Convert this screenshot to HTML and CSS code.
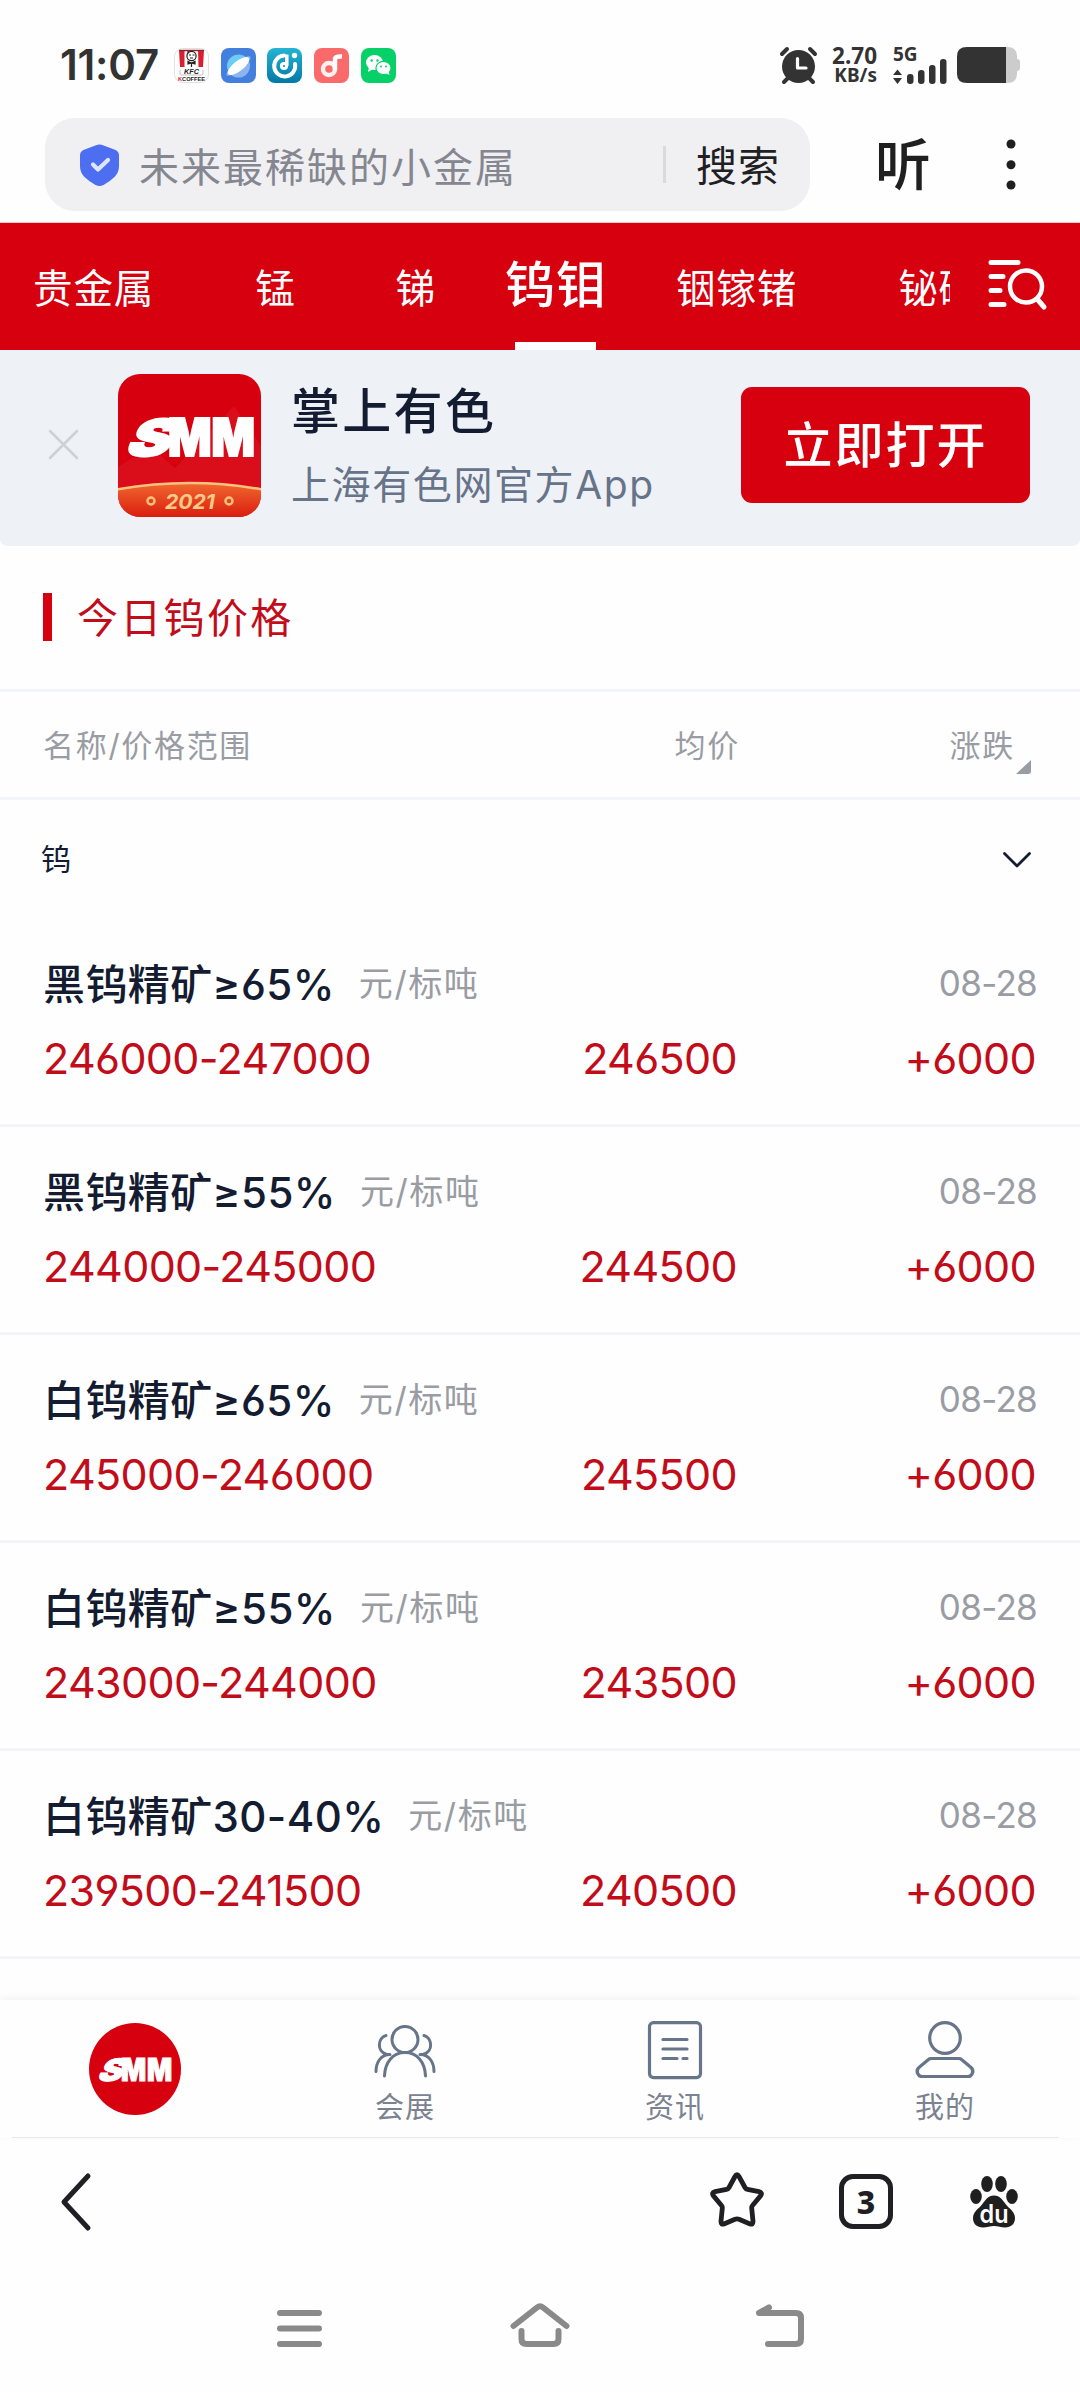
FILE: index.html
```html
<!DOCTYPE html>
<html lang="zh-CN">
<head>
<meta charset="utf-8">
<title>今日钨价格</title>
<link rel="stylesheet" href="styles.css">
</head>
<body>
<header class="status">
  <span class="clock">11:07</span>
  <div class="apps">
    <svg class="app" viewBox="0 0 35 35">
      <rect x=".5" y=".5" width="34" height="34" rx="8" fill="#fff" stroke="#e4e0e0"/>
      <path d="M5 2h5.500v17H6zM13 2h3l-2 6zM24 2h6l-1 17h-4.500z" fill="#d9202f"/>
      <path d="M5 2.500h25" stroke="#8a2430" stroke-width="1.500"/>
      <circle cx="17.500" cy="8" r="4.600" fill="#fff" stroke="#222" stroke-width="1.200"/>
      <path d="M15 7h2m1.500 0h2M16 10h3M14 13.500l3.500 1.500 3.500-1.500v2.500l-3.500-1-3.500 1zM17.500 15v4" fill="#222" stroke="#222" stroke-width="1.200"/>
      <text x="10" y="26" class="kfc" textLength="15" lengthAdjust="spacingAndGlyphs">KFC</text>
      <path d="M6 22v4q0 1 1.500 1h20q1.500 0 1.500-1v-4" fill="none" stroke="#999" stroke-width=".6"/>
      <text x="4" y="33" class="coffee" textLength="27" lengthAdjust="spacingAndGlyphs"><tspan fill="#d9202f">K</tspan>COFFEE</text>
    </svg>
    <svg class="app" viewBox="0 0 35 35">
      <rect width="35" height="35" rx="8" fill="#437fdc"/>
      <circle cx="17.500" cy="18" r="11.500" fill="#8db4ee"/>
      <path d="M6.500 21a11.500 11.500 0 0 1 19-11z" fill="#69cdf5"/>
      <ellipse cx="17.500" cy="18" rx="15" ry="4" transform="rotate(-38 17.500 18)" fill="#8db4ee"/>
      <ellipse cx="17.500" cy="18" rx="13" ry="5" transform="rotate(-38 17.500 18)" fill="#fff"/>
    </svg>
    <svg class="app" viewBox="0 0 35 35">
      <defs><linearGradient id="teal" x2="0" y2="1"><stop stop-color="#25b4d2"/><stop offset="1" stop-color="#0279a6"/></linearGradient></defs>
      <rect width="35" height="35" rx="8" fill="url(#teal)"/>
      <path d="M17 7.500a10.500 10.500 0 1 0 11 8.500" fill="none" stroke="#fff" stroke-width="4" stroke-linecap="round"/>
      <circle cx="17" cy="18" r="2.600" fill="none" stroke="#fff" stroke-width="3"/>
      <path d="M19.800 18V6.500" stroke="#fff" stroke-width="3.500"/>
      <circle cx="27.500" cy="7.500" r="2.700" fill="#fff"/>
    </svg>
    <svg class="app" viewBox="0 0 35 35">
      <rect width="35" height="35" rx="8" fill="#fa6a6a"/>
      <circle cx="15" cy="21" r="6" fill="none" stroke="#fff" stroke-width="4.500" opacity=".9"/>
      <path d="M21 22V11q0-3 7-2.500" fill="none" stroke="#fff" stroke-width="4.500"/>
    </svg>
    <svg class="app" viewBox="0 0 35 35">
      <rect width="35" height="35" rx="8" fill="#06d168"/>
      <ellipse cx="13.500" cy="14.500" rx="8.500" ry="7.500" fill="#fff"/>
      <path d="M8 19l-1 5 5-3z" fill="#fff"/>
      <ellipse cx="22.500" cy="20" rx="7.600" ry="6.600" fill="#fff" stroke="#06d168" stroke-width="1.200"/>
      <path d="M24 25l4.500 2-1-4z" fill="#fff"/>
      <g fill="#06d168"><circle cx="10.700" cy="12.500" r="1.200"/><circle cx="16.500" cy="12.500" r="1.200"/><circle cx="20" cy="18.500" r="1"/><circle cx="25" cy="18.500" r="1"/></g>
    </svg>
  </div>
  <svg class="alarm" viewBox="0 0 37 37">
    <circle cx="18.500" cy="19.500" r="16.500" fill="#333"/>
    <path d="M2 7l5-5M35 7l-5-5M4 35l5-5M33 35l-5-5" stroke="#333" stroke-width="4" stroke-linecap="round"/>
    <path d="M17.500 11.500v9.500h8.500" fill="none" stroke="#fff" stroke-width="3.200" stroke-linecap="round" stroke-linejoin="round"/>
  </svg>
  <div class="speed"><span class="rate">2.70</span><span class="unit-s">KB/s</span></div>
  <div class="signal">
    <span class="net">5G</span>
    <svg class="bars" viewBox="0 0 54 26">
      <path d="M4.500 11.500L9 17H0zM4.500 26L9 20H0z" fill="#333"/>
      <g fill="#333"><rect x="14" y="16" width="6.500" height="10" rx="3"/><rect x="25" y="12" width="6.500" height="14" rx="3"/><rect x="36" y="7" width="6.500" height="19" rx="3"/><rect x="47" y="1" width="6.500" height="25" rx="3"/></g>
    </svg>
  </div>
  <svg class="battery" viewBox="0 0 63 36">
    <path d="M48 0h2q10 0 10 9v3q3 0 3 3v6q0 3-3 3v3q0 9-10 9h-2z" fill="#ccc"/>
    <path d="M49 0H10Q0 0 0 9v18q0 9 10 9h39z" fill="#333"/>
  </svg>
</header>

<div class="searchbar">
  <div class="pill">
    <svg class="shield" viewBox="0 0 39 42">
      <path d="M16 1.200q3.500-1.600 7 0l12 4.600q4 1.600 4 5.500V22q0 6-4 10.500-5 5-11.500 8.500-4 2-8 0Q9 37.500 4 32.500 0 28 0 22V11.300Q0 7.400 4 5.800z" fill="#4e6ef2"/>
      <path d="M13 20.500l5 5 10-9.500" fill="none" stroke="#dfe5ff" stroke-width="4.200" stroke-linecap="round" stroke-linejoin="round"/>
    </svg>
    <span class="query">未来最稀缺的小金属</span>
    <span class="bar"></span>
    <span class="go">搜索</span>
  </div>
  <span class="listen">听</span>
  <svg class="more" viewBox="0 0 10 52"><g fill="#1f1f1f"><circle cx="5" cy="5" r="4.500"/><circle cx="5" cy="25.700" r="4.500"/><circle cx="5" cy="46" r="4.500"/></g></svg>
</div>

<nav class="tabs">
  <div class="track">
    <span class="tab t1">贵金属</span><span class="tab t2">锰</span><span class="tab t3">锑</span><span class="tab on">钨钼</span><span class="tab t5">铟镓锗</span><span class="tab t6">铋硒碲</span>
  </div>
  <svg class="find" viewBox="0 0 58 50" fill="none" stroke="#fff" stroke-linecap="round">
    <path d="M3 3.500h27M3 17.500h12M3 31.500h9M3 45.500h13" stroke-width="5"/>
    <circle cx="38" cy="27.500" r="16" stroke-width="4.500"/><path d="M50 41l6 7" stroke-width="5"/>
  </svg>
</nav>

<section class="banner">
  <svg class="close" viewBox="0 0 29 29"><path d="M1 1l27 27M28 1L1 28" stroke="#cdd0d5" stroke-width="2.500" stroke-linecap="round"/></svg>
  <svg class="logo" viewBox="0 0 143 143">
    <defs>
      <clipPath id="tile"><rect width="143" height="143" rx="22"/></clipPath>
      <linearGradient id="gold" x2="0" y2="1"><stop stop-color="#f0682f"/><stop offset="1" stop-color="#d8170c"/></linearGradient>
    </defs>
    <g clip-path="url(#tile)">
      <rect width="143" height="143" fill="#d6000f"/>
      <path d="M0 93l14-9 28-3 15 13 59-62 27 40v50H0z" fill="#e2202b" opacity=".4"/>
      <path d="M-4 116Q72 102 147 116v30H-4z" fill="url(#gold)" stroke="#ffc27d" stroke-width="2.500"/>
    </g>
    <text class="smm" transform="translate(5 82) skewX(-26)" font-size="51" textLength="43" lengthAdjust="spacingAndGlyphs">S</text>
    <text class="smm" x="50" y="82" font-size="52" textLength="87" lengthAdjust="spacingAndGlyphs">MM</text>
    <text class="year" x="47" y="134.500" font-size="20" textLength="50" lengthAdjust="spacingAndGlyphs">2021</text>
    <g fill="none" stroke="#ffc27d" stroke-width="2.500"><circle cx="33" cy="127" r="3.500"/><circle cx="111" cy="127" r="3.500"/></g>
  </svg>
  <div class="pitch"><span class="name">掌上有色</span><span class="desc">上海有色网官方App</span></div>
  <span class="open">立即打开</span>
</section>

<main class="prices">
  <h1 class="heading">今日钨价格</h1>
  <div class="cols"><span>名称/价格范围</span><span class="c2">均价</span><span class="c3">涨跌</span>
    <svg class="corner" viewBox="0 0 15 14"><path d="M0 14L15 0v11q0 3-3 3z" fill="#999ca3"/></svg></div>
  <div class="group"><span>钨</span>
    <svg class="chev" viewBox="0 0 28 16"><path d="M1.500 1.500L14 14 26.500 1.500" fill="none" stroke="#131c31" stroke-width="2.800" stroke-linecap="round" stroke-linejoin="round"/></svg></div>
  <article class="row"><div class="top"><b>黑钨精矿≥65%</b><i>元/标吨</i><time>08-28</time></div><div class="nums"><span>246000-247000</span><span>246500</span><span>+6000</span></div></article>
  <article class="row"><div class="top"><b>黑钨精矿≥55%</b><i>元/标吨</i><time>08-28</time></div><div class="nums"><span>244000-245000</span><span>244500</span><span>+6000</span></div></article>
  <article class="row"><div class="top"><b>白钨精矿≥65%</b><i>元/标吨</i><time>08-28</time></div><div class="nums"><span>245000-246000</span><span>245500</span><span>+6000</span></div></article>
  <article class="row"><div class="top"><b>白钨精矿≥55%</b><i>元/标吨</i><time>08-28</time></div><div class="nums"><span>243000-244000</span><span>243500</span><span>+6000</span></div></article>
  <article class="row"><div class="top"><b>白钨精矿30-40%</b><i>元/标吨</i><time>08-28</time></div><div class="nums"><span>239500-241500</span><span>240500</span><span>+6000</span></div></article>
</main>

<nav class="dock">
  <div class="item home"><svg class="round" viewBox="0 0 92 92"><circle cx="46" cy="46" r="46" fill="#d6000f"/><text class="smm small" transform="translate(7 57.500) skewX(-26)" font-size="31" textLength="25" lengthAdjust="spacingAndGlyphs">S</text><text class="smm small" x="32" y="57.500" font-size="31" textLength="52" lengthAdjust="spacingAndGlyphs">MM</text></svg></div>
  <div class="item"><svg class="ico" viewBox="0 0 64 58" fill="none" stroke="#66758a" stroke-width="3" stroke-linecap="round">
    <circle cx="32" cy="18.500" r="13"/><path d="M11.500 55C12 41 20 31.500 32 31.500S52 41 52.500 55M13 14.500C5 16.500 3 31 14 33.500h3M3 50.500c0-8 4-17 14-17M51 14.500c8 2 10 16.500-1 19h-3M61 50.500c0-8-4-17-14-17"/></svg><span>会展</span></div>
  <div class="item"><svg class="ico" viewBox="0 0 64 58" fill="none" stroke="#66758a" stroke-width="3.200" stroke-linecap="round">
    <rect x="6.500" y="1.600" width="51" height="55" rx="4"/><path d="M20 18.500h24M20 28h24M20 37.500h14M40 37.500h4"/></svg><span>资讯</span></div>
  <div class="item"><svg class="ico" viewBox="0 0 64 58" fill="none" stroke="#66758a" stroke-width="3.200" stroke-linejoin="round">
    <circle cx="32" cy="17" r="15.300"/><path d="M18 37.500h28q1.500 0 2.500 1l9 7.500c5 4 1 9.500-2.500 9.500H9c-3.500 0-7.500-5.500-2.500-9.500l9-7.500q1-1 2.500-1z"/></svg><span>我的</span></div>
</nav>

<nav class="browser">
  <svg class="back" viewBox="0 0 30 58"><path d="M27 3L3 29l24 26" fill="none" stroke="#1f1f24" stroke-width="5" stroke-linecap="round" stroke-linejoin="round"/></svg>
  <svg class="star" viewBox="0 0 56 56"><path d="M26 4.500q2-3.500 4 0l6 11q.8 1.500 2.500 1.800l11.500 2.400q4 1 1.500 4.200l-8 9.600q-1 1.200-.8 2.800l1.300 13q.2 4-3.500 2.500l-10.500-4.500q-2-.8-4 0l-10.500 4.500q-3.700 1.500-3.500-2.500l1.300-13q.2-1.600-.8-2.800l-8-9.600Q2 20.700 6 19.700l11.500-2.400q1.700-.3 2.500-1.800z" fill="none" stroke="#1f1f24" stroke-width="4.800" stroke-linejoin="round"/></svg>
  <span class="count">3</span>
  <svg class="du" viewBox="0 0 48 52"><g fill="#1f1f1f"><ellipse cx="17" cy="8" rx="5.800" ry="8"/><ellipse cx="31" cy="8" rx="5.800" ry="8"/><ellipse cx="6" cy="20.500" rx="5.800" ry="7.500"/><ellipse cx="42" cy="20.500" rx="5.800" ry="7.500"/><path d="M24 19.500c6 0 9 5 12 9s9 7 9 13.500c0 6-4 9.500-10 9.500-4 0-7-1.500-11-1.500s-7 1.500-11 1.500C7 51.500 3 48 3 42c0-6.500 6-9.500 9-13.500s6-9 12-9z"/></g>
    <text x="9.500" y="47" class="dut" textLength="29" lengthAdjust="spacingAndGlyphs">du</text></svg>
</nav>

<nav class="system">
  <svg viewBox="0 0 60 44"><path d="M10 10h39M10 25.500h39M10 41h39"/></svg>
  <svg viewBox="0 0 60 44"><path d="M3.500 23L27 4.500q3-2.500 6 0L56.500 23M11.500 28v8q0 5 5 5h27q5 0 5-5v-8"/></svg>
  <svg viewBox="0 0 60 44"><path d="M19 4.500L9 10h37q5 0 5 5v21q0 5-5 5H18"/></svg>
</nav>
</body>
</html>
```

FILE: styles.css
```css
* { box-sizing: border-box; }
body {
  margin: 0; width: 1080px; height: 2392px; overflow: hidden; background: #fefefe;
  font-family: Inter, "Noto Sans CJK SC", sans-serif; font-feature-settings: "cv03", "cv04";
  display: flex; flex-direction: column; color: #131c31; white-space: nowrap;
}
svg { display: block; flex: none; overflow: visible; }

.status { height: 108px; padding: 22px 60px 0 60px; display: flex; align-items: center; color: #333; }
.clock { width: 114px; font-size: 42px; font-weight: 600; line-height: 40px; letter-spacing: -.2px; }
.apps { display: flex; gap: 11.700px; margin-right: auto; }
.app { width: 35px; height: 35px; }
.kfc { font: italic 900 8px "Liberation Sans", sans-serif; fill: #222; }
.coffee { font: 900 6px "Liberation Sans", sans-serif; fill: #222; }
.alarm { width: 37px; height: 37px; margin-right: 15px; }
.speed { width: 45px; margin-right: 16px; display: flex; flex-direction: column; align-items: flex-end; font-family: "Noto Sans", sans-serif; font-weight: 700; }
.rate { font-size: 22.500px; line-height: 20px; }
.unit-s { font-size: 19px; line-height: 19px; }
.signal { width: 54px; height: 37px; margin-right: 10px; position: relative; font-family: "Noto Sans", sans-serif; font-weight: 700; }
.net { display: block; font-size: 19px; line-height: 15px; }
.bars { width: 54px; height: 26px; position: absolute; bottom: 0; left: 0; }
.battery { width: 63px; height: 36px; }

.searchbar { height: 114px; padding: 10px 64px 11px 45px; display: flex; align-items: center; }
.pill { width: 765px; height: 93px; border-radius: 30px; background: #f0f0f3; display: flex; align-items: center; padding: 0 30px 0 35px; }
.shield { width: 39px; height: 42px; }
.query { margin-left: 20px; font-size: 40px; letter-spacing: 2px; color: #858790; }
.bar { width: 3px; height: 37px; background: #d9d9de; margin-left: auto; margin-right: 30px; }
.go { font-size: 41px; letter-spacing: 1px; color: #1f1f24; padding-bottom: 4px; }
.listen { margin-left: 65px; font-size: 56px; font-weight: 500; line-height: 60px; color: #1f1f1f; }
.more { width: 10px; height: 52px; margin-left: auto; }

.tabs { height: 128px; border-top: 1px solid #f6c8cc; background: #d6000f; color: #fff; display: flex; padding: 0 34px 0 33px; align-items: stretch; }
.track { width: 917px; overflow: hidden; display: flex; }
.tab { font-size: 39.500px; letter-spacing: .9px; line-height: 132px; flex: none; }
.t2 { margin-left: 101px; }
.t3 { margin-left: 100px; }
.on { margin-left: 69px; font-size: 50px; font-weight: 500; letter-spacing: 1px; line-height: 125px; background: linear-gradient(#fff, #fff) 10px bottom / 81px 8px no-repeat; }
.t5 { margin-left: 69px; }
.t6 { margin-left: 101px; }
.find { width: 58px; height: 50px; margin: 36px 0 0 auto; }

.banner { height: 196px; background: #eef1f6; border-radius: 0 0 7px 7px; display: flex; align-items: center; padding: 0 50px 6px 49px; }
.close { width: 29px; height: 29px; margin: 0 40px 2px 0; }
.logo { width: 143px; height: 143px; }
.smm { font-family: Inter, sans-serif; font-weight: 900; fill: #fff; stroke: #fff; stroke-width: 2px; }
.small { stroke-width: 1px; }
.year { font-family: Inter, sans-serif; font-weight: 700; font-style: italic; fill: #ffc987; }
.pitch { margin-left: 30px; padding-top: 9px; display: flex; flex-direction: column; }
.name { font-size: 49px; letter-spacing: 2.300px; line-height: 70px; font-weight: 500; }
.desc { font-size: 39px; letter-spacing: 1.600px; line-height: 76px; color: #667388; }
.open { margin-left: auto; width: 289px; height: 116px; border-radius: 11px; background: #d6000f; color: #fff; text-align: center; font-size: 49px; letter-spacing: 2px; line-height: 117px; font-weight: 500; }

.prices { height: 1454px; }
.heading { margin: 0; height: 146px; border-bottom: 3px solid #f1f5f9; padding: 0 0 6px 43px; display: flex; align-items: center; font-size: 41px; font-weight: 400; letter-spacing: 2.300px; color: #c20c1a; }
.heading::before { content: ""; width: 9px; height: 48px; margin: 5px 25px 0 0; background: #d6000f; }
.cols { height: 108px; border-bottom: 3px solid #f1f5f9; padding: 0 49px 2px 43px; display: grid; grid-template-columns: 1fr 294px 275px 16px; align-items: center; font-size: 31px; letter-spacing: 1.700px; color: #999ca3; }
.c2, .c3 { text-align: right; }
.corner { width: 15px; height: 14px; justify-self: end; margin-top: 46px; }
.group { height: 119px; padding: 0 49px 5px 41px; display: flex; align-items: center; justify-content: space-between; font-size: 30px; }
.chev { width: 28px; height: 16px; margin-top: 6px; }
.row { height: 208px; border-bottom: 3px solid #f1f5f9; padding: 34px 44px 0 43px; }
.top { height: 56px; display: flex; align-items: center; }
.top b { font-size: 42px; font-weight: 500; letter-spacing: .4px; }
.top i { font-style: normal; font-size: 34px; letter-spacing: 1.600px; color: #999ca3; margin-left: 24px; }
.top time { margin: 3px -1px 0 auto; font-size: 35px; letter-spacing: -.7px; color: #999ca3; }
.nums { height: 98px; display: grid; grid-template-columns: 1fr 300px 299px; align-items: center; font-size: 43px; color: #c20c1a; letter-spacing: -.65px; }
.nums span + span { text-align: right; }

.dock { height: 138px; display: grid; grid-template-columns: repeat(4, 270px); box-shadow: 0 -2px 8px rgba(0, 0, 0, .05); background: linear-gradient(#e9e9eb, #e9e9eb) 12px bottom / 1047px 1px no-repeat #fefefe; position: relative; }
.item { display: flex; flex-direction: column; align-items: center; padding-top: 21px; font-size: 29px; letter-spacing: 1px; color: #7b8291; line-height: 58px; }
.ico { width: 64px; height: 58px; }
.round { width: 92px; height: 92px; margin-top: 2px; }

.browser { height: 142px; padding: 0 62px 15px 61px; display: flex; align-items: center; }
.back { width: 30px; height: 58px; margin-right: auto; }
.star { width: 56px; height: 56px; margin-bottom: 3px; }
.count { width: 54px; height: 55px; margin: 0 77px 0 74px; border: 5px solid #1f1f24; border-radius: 14px; text-align: center; font: 800 32px/46px "Noto Sans", sans-serif; color: #1f1f24; }
.du { width: 48px; height: 52px; }
.dut { font: 600 25px Inter, sans-serif; fill: #fff; }

.system { height: 112px; padding: 23px 270px 0; display: flex; justify-content: space-between; }
.system svg { width: 60px; height: 44px; fill: none; stroke: #8a8a8a; stroke-width: 6px; stroke-linecap: round; stroke-linejoin: round; }
```
